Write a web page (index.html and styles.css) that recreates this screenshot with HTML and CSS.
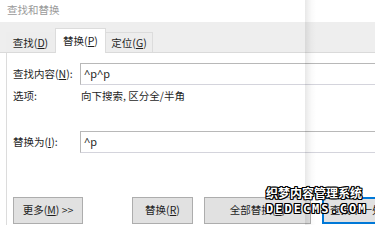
FILE: index.html
```html
<!DOCTYPE html>
<html lang="zh-CN">
<head>
<meta charset="utf-8">
<title>查找和替换</title>
<link rel="stylesheet" href="styles.css">
</head>
<body>
<div class="dialog">
  <div class="titlebar">查找和替换</div>
  <div class="tabstrip">
    <div class="tab tab-find">查找(<u>D</u>)</div>
    <div class="tab tab-replace active">替换(<u>P</u>)</div>
    <div class="tab tab-goto">定位(<u>G</u>)</div>
  </div>
  <div class="panel">
    <div class="form">
      <div class="label label-find">查找内容(<u>N</u>):</div>
      <div class="field">^p^p</div>
      <div class="label label-opt">选项:</div>
      <div class="optval">向下搜索, 区分全/半角</div>
      <div class="label label-rep">替换为(<u>I</u>):</div>
      <div class="field field-rep">^p</div>
    </div>
    <div class="buttons">
      <div class="btn btn-more">更多(<u>M</u>) &gt;&gt;</div>
      <div class="btn btn-rep">替换(<u>R</u>)</div>
      <div class="btn btn-all">全部替换(<u>A</u>)</div>
      <div class="btn btn-next">查找下一处(<u>F</u>)</div>
    </div>
  </div>
  <div class="edge-shadow"></div>
  <div class="watermark">
    <div class="wm-cn">织梦内容管理系统</div>
    <div class="wm-en">DEDECMS.COM</div>
  </div>
</div>
</body>
</html>
```
FILE: styles.css
```css
html, body {
  margin: 0;
  padding: 0;
  background: #ffffff;
}
body {
  width: 375px;
  height: 225px;
  overflow: hidden;
  font-family: "Noto Sans CJK SC", "Noto Sans", sans-serif;
  font-size: 10.5px;
  color: #1e1e1e;
}
u { text-decoration: underline; text-underline-offset: 1px; }
.dialog {
  position: relative;
  width: 375px;
  height: 225px;
  overflow: hidden;
}
.titlebar {
  height: 22px;
  line-height: 19px;
  padding-left: 7px;
  color: #9a9a9a;
  font-size: 10.5px;
}
.tabstrip {
  height: 31px;
  background: #eeeeee;
  border-bottom: 1px solid #dadada;
  box-sizing: border-box;
  display: flex;
  align-items: flex-end;
  padding-left: 6px;
}
.tab {
  box-sizing: border-box;
  height: 20px;
  line-height: 19px;
  text-align: center;
  border: 1px solid #dcdcdc;
  border-bottom: none;
  background: #ededed;
}
.tab-find { width: 49px; border-color: transparent; }
.tab-replace {
  width: 51px;
  height: 25px;
  line-height: 24px;
  background: #ffffff;
  margin-bottom: -1px;
}
.tab-goto { width: 47px; border-left: none; }
.panel {
  margin-left: 6px;
  border-left: 1px solid #dcdcdc;
  height: 200px;
  padding-left: 6px;
}
.form {
  display: grid;
  grid-template-columns: 67px 1fr;
  grid-template-rows: 22px 17px 29px 22px;
  padding-top: 10px;
  align-items: center;
}
.label { line-height: 14px; }
.field {
  box-sizing: border-box;
  height: 22px;
  width: 320px;
  border: 1px solid #b8b8b8;
  border-bottom-color: #d4d4dc;
  line-height: 19px;
  padding-left: 3px;
  font-family: "Noto Sans", sans-serif;
  font-size: 11px;
}
.label-opt { align-self: end; margin-bottom: -1px; }
.optval { align-self: end; padding-left: 1px; margin-bottom: -1px; }
.label-rep { grid-row: 4; }
.field-rep { grid-row: 4; }
.buttons {
  display: flex;
  margin-top: 44px;
  gap: 11px;
}
.btn {
  box-sizing: border-box;
  height: 27px;
  line-height: 23px;
  background: #e1e1e1;
  border: 1px solid #adadad;
  text-align: center;
  white-space: nowrap;
  flex: none;
}
.btn-more { width: 70px; margin-right: 38px; }
.btn-rep { width: 61px; }
.btn-all { width: 107px; }
.btn-next {
  width: 90px;
  border: 2px solid #0078d7;
  line-height: 21px;
  text-align: left;
  padding-left: 6px;
}
.edge-shadow {
  position: absolute;
  left: 305px;
  top: 0;
  width: 11px;
  height: 225px;
  background: linear-gradient(to right, rgba(0,0,0,0.09), rgba(0,0,0,0.02) 60%, rgba(0,0,0,0));
}
.watermark {
  position: absolute;
  left: 266px;
  top: 184px;
  color: #ffffff;
  font-weight: bold;
  text-shadow:
    1px 0 0 #000, -1px 0 0 #000, 0 1px 0 #000, 0 -1px 0 #000,
    1px 1px 0 #000, -1px -1px 0 #000, 1px -1px 0 #000, -1px 1px 0 #000;
}
.wm-cn {
  font-size: 12px;
  line-height: 17px;
}
.wm-en {
  font-family: "DejaVu Sans Mono", monospace;
  font-size: 12px;
  line-height: 17px;
  letter-spacing: 2px;
}
```
